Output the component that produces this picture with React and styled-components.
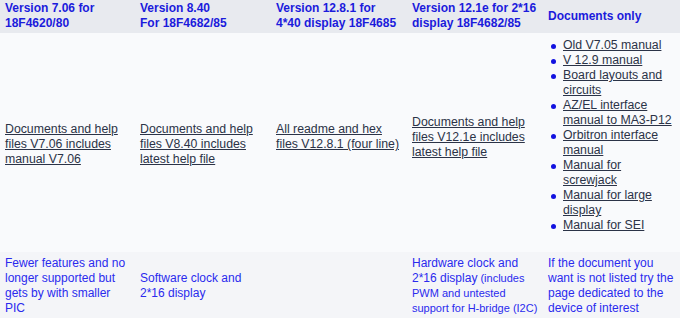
import React from "react";
import styled, { createGlobalStyle } from "styled-components";

const Global = createGlobalStyle`
  html, body { margin: 0; padding: 0; overflow: hidden; background: #f9fafc; }
  body { font-family: "Liberation Sans", Arial, sans-serif; }
`;

const Table = styled.table`
  width: 680px;
  table-layout: fixed;
  border-collapse: collapse;
  border-spacing: 0;
  font-family: "Liberation Sans", Arial, sans-serif;
`;

const HeadCell = styled.th`
  background: #e8eaef;
  color: #1b1bdc;
  font-size: 12px;
  font-weight: bold;
  line-height: 15px;
  text-align: left;
  vertical-align: middle;
  padding: 1px 5px 2px;
`;

const Cell = styled.td`
  background: #f9fafc;
  vertical-align: ${(p) => (p.$top ? "top" : "middle")};
  padding: ${(p) => (p.$top ? "5px 5px 5px" : `9px 5px ${5 + (p.$extra || 0)}px`)};
  font-size: 12.3px;
  line-height: 15px;
`;

const NoteCell = styled.td`
  background: #f4f5f8;
  color: #2a2aee;
  font-size: 12px;
  line-height: 15px;
  vertical-align: middle;
  padding: 4px 5px;
`;

const Small = styled.span`
  font-size: 11px;
  line-height: 15px;
`;

const Link = styled.a`
  color: #2b3347;
  text-decoration: underline;
  cursor: pointer;
`;

const DocList = styled.ul`
  list-style: none;
  margin: 0 0 14px;
  padding: 0 0 0 15px;
`;

const DocItem = styled.li`
  position: relative;
  &::before {
    content: "";
    position: absolute;
    left: -12px;
    top: 6px;
    width: 5px;
    height: 5px;
    border-radius: 50%;
    background: #1212e0;
  }
`;

const headers = [
  ["Version 7.06 for", "18F4620/80"],
  ["Version 8.40", "For 18F4682/85"],
  ["Version 12.8.1 for", "4*40 display 18F4685"],
  ["Version 12.1e for 2*16", "display 18F4682/85"],
  ["Documents only"],
];

const docs = [
  "Old V7.05 manual",
  "V 12.9 manual",
  "Board layouts and circuits",
  "AZ/EL interface manual to MA3-P12",
  "Orbitron interface manual",
  "Manual for screwjack",
  "Manual for large display",
  "Manual for SEI",
];

export default function App() {
  return (
    <>
      <Global />
      <Table>
        <colgroup>
          <col style={{ width: 135 }} />
          <col style={{ width: 136 }} />
          <col style={{ width: 136 }} />
          <col style={{ width: 136 }} />
          <col style={{ width: 137 }} />
        </colgroup>
        <thead>
          <tr>
            {headers.map((h, i) => (
              <HeadCell key={i}>
                {h.map((line, j) => (
                  <React.Fragment key={j}>
                    {j > 0 && <br />}
                    {line}
                  </React.Fragment>
                ))}
              </HeadCell>
            ))}
          </tr>
        </thead>
        <tbody>
          <tr>
            <Cell>
              <Link>Documents and help files V7.06 includes manual V7.06</Link>
            </Cell>
            <Cell>
              <Link>Documents and help files V8.40 includes latest help file</Link>
            </Cell>
            <Cell $extra={15}>
              <Link>All readme and hex files V12.8.1 (four line)</Link>
            </Cell>
            <Cell $extra={15}>
              <Link>Documents and help files V12.1e includes latest help file</Link>
            </Cell>
            <Cell $top>
              <DocList>
                {docs.map((d) => (
                  <DocItem key={d}>
                    <Link>{d}</Link>
                  </DocItem>
                ))}
              </DocList>
            </Cell>
          </tr>
          <tr>
            <NoteCell>
              Fewer features and no longer supported but gets by with smaller PIC
            </NoteCell>
            <NoteCell>Software clock and 2*16 display</NoteCell>
            <NoteCell />
            <NoteCell>
              Hardware clock and 2*16 display
              <Small> (includes PWM and untested support for H-bridge (I2C)</Small>
            </NoteCell>
            <NoteCell>
              If the document you want is not listed try the page dedicated to the device of interest
            </NoteCell>
          </tr>
        </tbody>
      </Table>
    </>
  );
}
